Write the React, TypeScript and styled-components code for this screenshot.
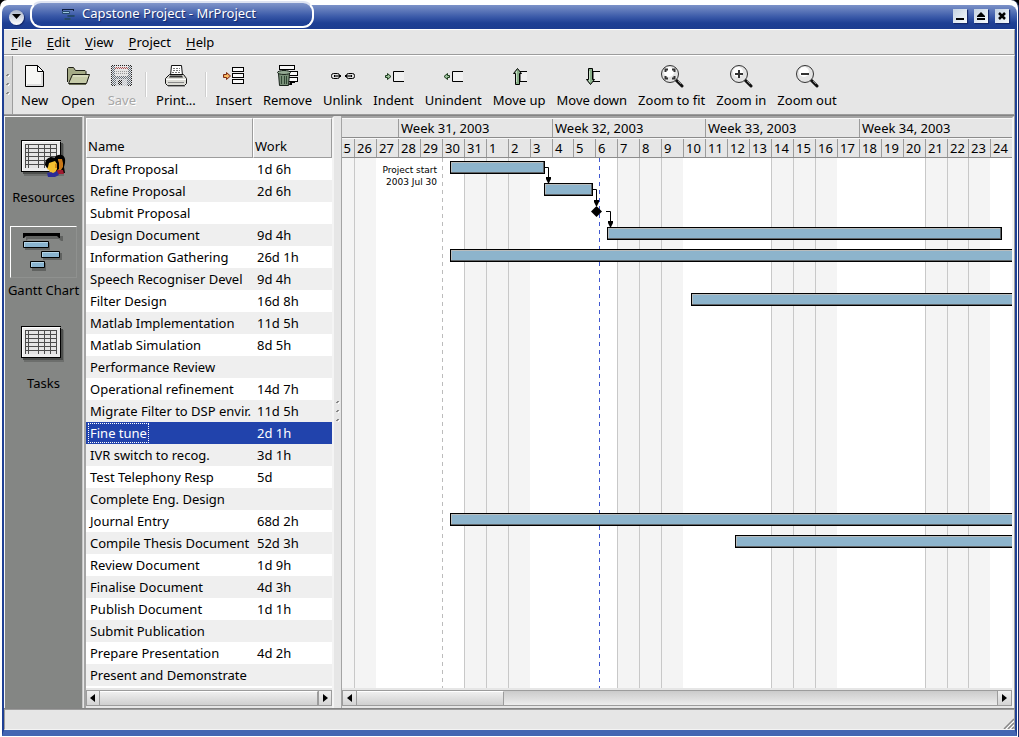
import React from "react";
import styled, { createGlobalStyle, css } from "styled-components";

const FACE = "#e6e6e6";
const DARK = "#9c9c9c";
const FONT = '"Noto Sans", "Open Sans", sans-serif';

const Global = createGlobalStyle`
  * { box-sizing: border-box; }
  body { margin: 0; background: #000; font: 13px/18px ${FONT}; color: #000; }
  button { font: inherit; color: inherit; border: 0; padding: 0; margin: 0; background: none; }
`;

/* ---------- window frame ---------- */

const Frame = styled.div`
  min-height: 100vh;
  display: flex;
  flex-direction: column;
  background: #fff;
  border-right: 1px solid #1b2f6b;
  border-bottom: 1px solid #1b2f6b;
  border-radius: 7px 8px 0 0;
  padding: 5px 1px 1px 2px;
`;

const Body = styled.div`
  flex: 1;
  display: flex;
  flex-direction: column;
  min-width: 0;
  background: ${FACE};
  border-left: 2px solid #1e3f94;
  border-right: 2px solid #1e3f94;
  border-bottom: 6px solid #4466b2;
`;

const TitleBar = styled.header`
  display: flex;
  align-items: center;
  height: 24px;
  padding: 0 8px 0 7px;
  border-radius: 7px 8px 0 0;
  background: linear-gradient(#7c92c8, #3a59a8 50%, #1e3f94 75%, #1c3c90);
`;

const TitleTab = styled.div`
  display: flex;
  align-items: center;
  gap: 7px;
  width: 284px;
  height: 27px;
  margin: -5px auto 0 6px;
  padding: 0 0 0 29px;
  border: 2px solid #fff;
  border-top-color: #dfe4f2;
  border-radius: 11px;
  background: linear-gradient(#8196ca, #3a59a8 55%, #1e3f94 85%);
  color: #fff;
  text-shadow: 1px 1px 1px #14286a;
`;

const Title = styled.h1`
  margin: 0;
  padding-bottom: 3px;
  font: inherit;
`;

const RoundButton = styled.button`
  display: grid;
  place-items: center;
  width: 15px;
  height: 15px;
  border-radius: 50%;
  background: linear-gradient(#a9b4c8, #fff);
  box-shadow: 1px 1px 1px #14286a;
`;

const WindowButtons = styled.div`
  display: flex;
  gap: 7px;
  padding-bottom: 2px;
`;

const WindowButton = styled.button`
  display: grid;
  place-items: center;
  width: 14px;
  height: 14px;
  background: linear-gradient(135deg, #c4d2e2, #f6fafc);
  box-shadow: 1px 1px 1px #14286a;
`;

/* ---------- menu and toolbar ---------- */

const MenuBar = styled.nav`
  display: flex;
  align-items: center;
  height: 26px;
  border-top: 1px solid #fff;
  border-bottom: 1px solid ${DARK};
  border-right: 1px solid ${DARK};
`;

const MenuItem = styled.button`
  padding: 0 8px 0 7px;
  u { text-underline-offset: 2px; }
`;

const ToolBar = styled.div`
  display: flex;
  height: 60px;
  border-top: 1px solid #fff;
  border-bottom: 1px solid ${DARK};
  border-right: 1px solid ${DARK};
`;

const Handle = styled.div`
  display: grid;
  place-items: center;
  width: 9px;
  margin-right: 8px;
  background: #d6d6d6;
  border-right: 1px solid ${DARK};
`;

const ToolGroup = styled.div<{ $gap?: number }>`
  display: flex;
  gap: ${(p) => p.$gap ?? 13}px;
`;

const ToolButton = styled.button`
  display: flex;
  flex-direction: column;
  align-items: center;
  gap: 3px;
  padding-top: 8px;
  white-space: nowrap;
  &:disabled { color: #a6a6a6; text-shadow: 1px 1px 0 #fff; }
  svg { display: block; }
`;

const Divider = styled.div`
  width: 2px;
  height: 25px;
  margin: 16px 9px 0;
  border-left: 1px solid #cfcfcf;
  border-right: 1px solid #fff;
`;

/* ---------- work area ---------- */

const Work = styled.main`
  flex: 1;
  display: flex;
  min-height: 0;
  border-top: 1px solid #848484;
  border-bottom: 1px solid #848484;
  border-right: 1px solid ${DARK};
`;

const Sidebar = styled.nav`
  flex: none;
  width: 79px;
  padding: 16px 0 0;
  display: flex;
  flex-direction: column;
  align-items: center;
  gap: 17px;
  background: #848684;
  border-left: 1px solid #f4f4f4;
  border-right: 1px solid #c6c6c6;
  border-top: 1px solid #f4f4f4;
`;

const View = styled.button`
  display: flex;
  flex-direction: column;
  align-items: center;
  gap: 3px;
  height: 76px;
  white-space: nowrap;
`;

const ViewIcon = styled.span<{ $on?: boolean }>`
  display: grid;
  place-items: center;
  width: 67px;
  height: 52px;
  border: 1px solid transparent;
  ${(p) => p.$on && css`
    border-color: #fff #8f918f #8f918f #fff;
  `}
`;

const Panel = styled.section<{ $grow?: boolean }>`
  display: flex;
  flex-direction: column;
  min-width: 0;
  padding-bottom: 2px;
  border-top: 2px solid #a4a4a4;
  border-left: ${(p) => (p.$grow ? 1 : 2)}px solid #a4a4a4;
  border-right: 2px solid #f4f4f4;
  ${(p) => (p.$grow ? "flex: 1;" : "flex: none; width: 250px; margin-left: 1px;")}
`;

const Pane = styled.div`
  flex: 1;
  min-height: 0;
  overflow: hidden;
  background: #fff;
`;

const Splitter = styled.div`
  flex: none;
  display: grid;
  place-items: center;
  width: 7px;
`;

const TaskTable = styled.table`
  width: 100%;
  table-layout: fixed;
  border-collapse: separate;
  border-spacing: 0;
`;

const HeadCell = styled.th<{ $w?: number }>`
  ${(p) => p.$w && `width: ${p.$w}px;`}
  height: 40px;
  padding: 0 0 2px 1px;
  text-align: left;
  vertical-align: bottom;
  font-weight: 400;
  background: ${FACE};
  border: 1px solid ${DARK};
  border-left-color: #fff;
  border-top-color: #fff;
`;

const TaskRow = styled.tr<{ $on?: boolean }>`
  background: #fff;
  &:nth-child(even) { background: #efefef; }
  ${(p) => p.$on && css`
    && { background: #2143ac; color: #fff; }
  `}
`;

const Cell = styled.td`
  height: 22px;
  padding: 0 0 0 2px;
  white-space: nowrap;
  overflow: hidden;
`;

const CellText = styled.span<{ $focus?: boolean }>`
  display: inline-block;
  padding: 0 1px;
  border: 1px ${(p) => (p.$focus ? "dotted #fff" : "solid transparent")};
`;

/* ---------- scroll bars ---------- */

const Track = styled.div`
  flex: none;
  display: flex;
  height: 16px;
  margin-top: 2px;
  border: 1px solid ${DARK};
  background: linear-gradient(#cbcbcb, #ececec);
`;

const Arrow = styled.button`
  display: grid;
  place-items: center;
  width: 14px;
  background: linear-gradient(#f0f0f0, #d4d4d4);
  &:first-child { border-right: 1px solid ${DARK}; }
  &:last-child { border-left: 1px solid ${DARK}; margin-left: auto; }
`;

const Thumb = styled.div<{ $size: string }>`
  width: ${(p) => p.$size};
  background: linear-gradient(#efefef, #cfcfcf);
  border-right: 1px solid ${DARK};
  border-top: 1px solid #fff;
`;

/* ---------- time scale ---------- */

const Scale = styled.div`
  display: flex;
  height: 20px;
  background: ${FACE};
  border-top: 1px solid #f8f8f8;
  border-bottom: 1px solid #8c8c8c;
`;

const Tick = styled.div<{ $w: number; $end?: boolean }>`
  flex: none;
  display: flex;
  justify-content: ${(p) => (p.$end ? "flex-end" : "flex-start")};
  width: ${(p) => p.$w}px;
  padding: 0 3px 0 2px;
  overflow: hidden;
  white-space: nowrap;
  border-left: 1px solid ${(p) => (p.$end ? "transparent" : DARK)};
`;

const Chart = styled.svg`
  display: block;
  width: 100%;
  height: 530px;
`;

const StatusBar = styled.footer`
  display: flex;
  justify-content: flex-end;
  align-items: flex-end;
  height: 21px;
  border: 1px solid ${DARK};
  border-bottom-color: #f4f4f4;
`;

/* ---------- data ---------- */

const tasks: [string, string][] = [
  ["Draft Proposal", "1d 6h"],
  ["Refine Proposal", "2d 6h"],
  ["Submit Proposal", ""],
  ["Design Document", "9d 4h"],
  ["Information Gathering", "26d 1h"],
  ["Speech Recogniser Devel", "9d 4h"],
  ["Filter Design", "16d 8h"],
  ["Matlab Implementation", "11d 5h"],
  ["Matlab Simulation", "8d 5h"],
  ["Performance Review", ""],
  ["Operational refinement", "14d 7h"],
  ["Migrate Filter to DSP envir.", "11d 5h"],
  ["Fine tune", "2d 1h"],
  ["IVR switch to recog.", "3d 1h"],
  ["Test Telephony Resp", "5d"],
  ["Complete Eng. Design", ""],
  ["Journal Entry", "68d 2h"],
  ["Compile Thesis Document", "52d 3h"],
  ["Review Document", "1d 9h"],
  ["Finalise Document", "4d 3h"],
  ["Publish Document", "1d 1h"],
  ["Submit Publication", ""],
  ["Prepare Presentation", "4d 2h"],
  ["Present and Demonstrate", ""],
];

// July 26 is day 0; the view starts part-way through July 25.
// Eighteen days take 395px; day edges snap to whole pixels.
const dayX = (i: number) => 12 + Math.round((i * 395) / 18);
const days = Array.from({ length: 30 }, (_, i) => i);
const dayNumber = (i: number) => new Date(2003, 6, 26 + i).getDate();
const isOff = (i: number) => i === 0 || (i >= 5 && (i - 5) % 7 < 3);
const weeks = [0, 1, 2, 3];

const bars = [
  { row: 0, x: 108, w: 95 },
  { row: 1, x: 202, w: 49 },
  { row: 3, x: 265, w: 395 },
  { row: 4, x: 108, w: 1500 },
  { row: 6, x: 349, w: 1300 },
  { row: 16, x: 108, w: 1500 },
  { row: 17, x: 393, w: 1200 },
];

/* ---------- drawings ---------- */

const Svg = ({ w = 24, h = 24, children }: { w?: number; h?: number; children: React.ReactNode }) => (
  <svg width={w} height={h} viewBox={`0 0 ${w} ${h}`} aria-hidden="true">{children}</svg>
);

const Grip = () => (
  <Svg w={6} h={24}>
    {[1, 10, 19].map((y) => (
      <g key={y}>
        <path d={`M1 ${y + 1}h1v-1h2v1h-1v1h-2z`} fill="#858585" />
        <path d={`M3 ${y + 2}h1v1h-1z M4 ${y + 1}h1v1h-1z`} fill="#fff" />
      </g>
    ))}
  </Svg>
);

const NewIcon = () => (
  <Svg>
    <path d="M2.500 1.500h12l6 6v15h-18z" fill="#f7f7f5" stroke="#000" />
    <path d="M4 21h15v-12" fill="none" stroke="#ddd" strokeWidth="2" />
    <path d="M14.500 1.500v6h6z" fill="#fff" stroke="#000" strokeLinejoin="round" />
  </Svg>
);

const OpenIcon = () => (
  <Svg>
    <path d="M1.500 18V4.500l1-1h5l2 3h9.500l1 1v4" fill="#a5ab86" stroke="#1c1c14" />
    <path d="M2.500 19.500l4-9h17l-3 9z" fill="#c6cba8" stroke="#1c1c14" strokeLinejoin="round" />
    <path d="M7 12h15" stroke="#e7ead2" />
    <path d="M3 20.500h17" stroke="#6c7158" />
  </Svg>
);

const SaveIcon = () => (
  <Svg>
    <defs>
      <pattern id="stipple" width="2" height="2" patternUnits="userSpaceOnUse">
        <path d="M0 0h1v1h-1z M1 1h1v1h-1z" fill="#e6e6e6" />
      </pattern>
    </defs>
    <g shapeRendering="crispEdges">
      <path d="M1 1h21v21h-20l-1-1z" fill="#222" />
      <path d="M2 2h19v19h-19z" fill="#66707a" />
      <path d="M5 2h13v10h-13z" fill="#e4e4e4" />
      <path d="M5 3h13v2h-13z" fill="#b05050" />
      <path d="M6 7h11v1h-11z M6 9h11v1h-11z" fill="#999" />
      <path d="M6 15h11v7h-11z" fill="#c0c4ca" />
      <path d="M8 16h4v5h-4z" fill="#222" />
      <path d="M1 1h21v21h-21z" fill="url(#stipple)" />
    </g>
  </Svg>
);

const PrintIcon = () => (
  <Svg>
    <path d="M6.500 11.500l1-10h10l1 10z" fill="#fff" stroke="#111" />
    <path d="M9 4.500h7M9 6.500h7M8 8.500h8" stroke="#777" strokeDasharray="2 1" />
    <path d="M1.500 14.500l4-4h14l3 4v5l-2 2h-17l-2-2z" fill="#dcdcd6" stroke="#111" strokeLinejoin="round" />
    <path d="M6 11.500h12l1 2h-14z" fill="#333" />
    <path d="M2 15.500h20" stroke="#fff" />
    <path d="M4 18.500h16" stroke="#888" />
    <path d="M4 22h17" stroke="#555" />
  </Svg>
);

const Slots = ({ x, ys, w = 11 }: { x: number; ys: number[]; w?: number }) => (
  <>
    {ys.map((y) => (
      <rect key={y} x={x + 0.5} y={y + 0.5} width={w} height={4} fill="#f8f8f8" stroke="#000" />
    ))}
  </>
);

const InsertIcon = () => (
  <Svg>
    <Slots x={10} ys={[3, 9, 15]} />
    <path d="M1.500 10.500h3v-2l4 3.500-4 3.500v-2h-3z" fill="#f0a060" stroke="#7c2d10" />
    <path d="M3 12h3" stroke="#ffe060" />
  </Svg>
);

const RemoveIcon = () => (
  <Svg>
    <Slots x={4} ys={[1]} w={15} />
    <Slots x={10} ys={[7, 13]} w={12} />
    <path d="M15 17h5v2h-3v2h-3z" />
    <path d="M3.500 9.500h11l-1 12h-9z" fill="#789078" stroke="#18221a" />
    <ellipse cx="9" cy="8.500" rx="6.500" ry="2" fill="#93aa93" stroke="#18221a" />
    <path d="M6.500 12v8M9.500 12v8M11.500 12v8" stroke="#304634" />
    <path d="M7 6.500h4" stroke="#18221a" />
  </Svg>
);

const UnlinkIcon = () => (
  <Svg w={26}>
    <rect x="1.500" y="9.500" width="8" height="5" rx="2" fill="#ddd" stroke="#000" />
    <path d="M4 11.500h7M4 12.500h7" stroke="#000" />
    <path d="M5 12h4" stroke="#bbb" />
    <rect x="16.500" y="9.500" width="8" height="5" rx="2" fill="#ddd" stroke="#000" />
    <path d="M15 11.500h7M15 12.500h7" stroke="#000" />
    <path d="M17 12h4" stroke="#bbb" />
  </Svg>
);

const IndentIcon = ({ out }: { out?: boolean }) => (
  <Svg>
    <rect x="12" y="8" width="10" height="9" fill="#f0f0f0" />
    <path d="M22 7.500h-10.500v10h10.500" fill="none" stroke="#000" />
    <path
      d={out ? "M8.500 11.500h-2v-2l-3.500 3 3.500 3v-2h2z" : "M3.500 11.500h2v-2l3.500 3-3.500 3v-2h-2z"}
      fill="#9cc29c"
      stroke="#1c3a1c"
    />
  </Svg>
);

const MoveIcon = ({ down }: { down?: boolean }) => (
  <Svg>
    <rect x="11" y="8" width="9" height="9" fill="#f0f0f0" />
    <path d="M20 7.500h-7v10h7" fill="none" stroke="#000" />
    <path
      d={down ? "M8.500 4.500h4v11h2l-4 5-4-5h2z" : "M8.500 20.500h4v-11h2l-4-5-4 5h2z"}
      fill="#88ae88"
      stroke="#000"
    />
    <path d="M9.500 7v11" stroke="#c4dcc4" />
  </Svg>
);

const ZoomIcon = ({ kind }: { kind: "fit" | "in" | "out" }) => (
  <Svg>
    <path d="M16 16l6 6" stroke="#111" strokeWidth="3" strokeLinecap="round" />
    <path d="M18 17l3 3" stroke="#888" />
    <circle cx="10" cy="10" r="8.500" fill="#e4e4e4" stroke="#333" />
    <circle cx="9" cy="8" r="5" fill="#fff" />
    {kind === "fit" ? (
      <path d="M8 5.500h-2.500v2.500M12 5.500h2.500v2.500M8 14.500h-2.500v-2.500M12 14.500h2.500v-2.500" fill="none" stroke="#333" strokeWidth="2" />
    ) : (
      <path d={kind === "in" ? "M6 10h8M10 6v8" : "M6 10h8"} stroke="#333" strokeWidth="2" />
    )}
  </Svg>
);

const Sheet = () => (
  <>
    <rect x="4" y="5" width="40" height="32" fill="#6c6e6c" />
    <rect x="3" y="4" width="40" height="31" fill="#4c4e4c" />
    <rect x="1.500" y="1.500" width="39" height="31" fill="#ececec" stroke="#000" />
    <path d="M2.500 32V2.500h38" fill="none" stroke="#fff" />
    <rect x="5" y="5" width="32" height="24" fill="#4c4c4c" />
    {[6, 10, 14, 18, 22, 26].map((y) => (
      <path key={y} d={`M6 ${y}h2v3h-2z M9 ${y}h9v3h-9z M19 ${y}h5v3h-5z M25 ${y}h5v3h-5z M31 ${y}h5v3h-5z`} fill="#e4e4e4" />
    ))}
  </>
);

const ResourcesIcon = () => (
  <Svg w={48} h={40}>
    <Sheet />
    <path d="M34 20q2-5 8-4 4 2 3 8l-1 4 1 6h-9z" fill="#000" />
    <path d="M38 20h4l1 4v4l-2 3h-4z" fill="#c87818" />
    <path d="M37 31h6l1 4h-8z" fill="#a01c30" />
    <path d="M25 26q0-7 6-8 7 0 8 6v6l-3 2-9-3z" fill="#000" />
    <path d="M29 24l6-2 2 3v5l-2 4h-5l-1-3-2-1 1-2z" fill="#f4c030" />
    <path d="M35 25h2v4h-2z" fill="#d08818" />
    <path d="M27 34l4-1 2 1 4-2 2 4-4 2h-7z" fill="#2c2c98" />
  </Svg>
);

const TasksIcon = () => <Svg w={48} h={40}><Sheet /></Svg>;

const GanttIcon = () => (
  <Svg w={48} h={40}>
    <path d="M7 4h37v5h-2l-2-2H9l-2 2zM6 11h25v7H6zM24 21h19v7H24zM13 31h14v8H13z" fill="#606260" />
    <path d="M4 1h37v5h-1l-2-2H7l-2 2H4z" fill="#000" />
    <path d="M4.500 9.500h25v6h-25zM22.500 19.500h18v6h-18zM11.500 29.500h14v6h-14z" fill="#8ab4cf" stroke="#000" />
    <path d="M5.500 15V10.500H29M23.500 25v-4.500H40M12.500 35v-4.500H25" fill="none" stroke="#b4d4e6" />
  </Svg>
);

const TitleIcon = () => (
  <Svg w={14} h={14}>
    <path d="M1 1h12v2h-1v-1h-10v1h-1z" fill="#0c1c3c" />
    <path d="M1.500 3.500h7v2h-7zM6.500 7.500h7v1h-7zM3.500 10.500h6v1h-6z" fill="#9cc8dc" stroke="#24486c" />
  </Svg>
);

const Triangle = ({ left }: { left?: boolean }) => (
  <Svg w={5} h={8}><path d={left ? "M5 0v8L0 4z" : "M0 0v8l5-4z"} /></Svg>
);

const ResizeGrip = () => (
  <Svg w={11} h={11}>
    <path d="M1 11L11 1M5 11l6-6M9 11l2-2" stroke="#888" strokeWidth="1.500" />
    <path d="M3 11l8-8M7 11l4-4" stroke="#fff" />
  </Svg>
);

const Bar = ({ row, x, w }: { row: number; x: number; w: number }) => {
  const y = 3 + row * 22;
  return (
    <g shapeRendering="crispEdges">
      <rect x={x} y={y} width={w} height={13} fill="#000" />
      <rect x={x + 1} y={y + 1} width={w - 2} height={11} fill="#5f6467" />
      <rect x={x + 1} y={y + 1} width={w - 3} height={10} fill="#b9bcbc" />
      <rect x={x + 2} y={y + 2} width={w - 4} height={9} fill="#8db4cc" />
    </g>
  );
};

const Link = ({ x, y, dx, bottom }: { x: number; y: number; dx: number; bottom: number }) => (
  <g>
    <path d={`M${x} ${y + 0.5}h${dx + 0.5}V${bottom}`} fill="none" stroke="#000" />
    <path d={`M${x + dx - 2} ${bottom - 6}h5v2l-2 4h-1l-2-4z`} />
  </g>
);

const GanttChart = () => (
  <Chart role="img" aria-label="Gantt chart">
    <g shapeRendering="crispEdges">
      <rect x="0" y="0" width="12" height="100%" fill="#f4f4f4" />
      {days.filter(isOff).map((i) => (
        <React.Fragment key={i}>
          <rect x={dayX(i)} y="0" width={dayX(i + 1) - dayX(i)} height="100%" fill="#f4f4f4" />
          <rect x={dayX(i)} y="0" width="1" height="100%" fill="#c8c8c8" />
        </React.Fragment>
      ))}
      <line x1="100.500" x2="100.500" y1="0" y2="100%" stroke="#bcbcbc" strokeDasharray="4 4" />
      <line x1="257.500" x2="257.500" y1="0" y2="100%" stroke="#4058d0" strokeDasharray="4 4" />
    </g>
    <g fontFamily='"DejaVu Sans", sans-serif' fontSize="9" textAnchor="end">
      <text x="95" y="15">Project start</text>
      <text x="95" y="27">2003 Jul 30</text>
    </g>
    {bars.map((b) => <Bar key={b.row} {...b} />)}
    <Link x={203} y={9} dx={3} bottom={25} />
    <Link x={251} y={31} dx={3} bottom={48} />
    <Link x={264} y={53} dx={4} bottom={69} />
    <path d="M254.500 48l5.500 5.500-5.500 5.500-5.500-5.500z" />
  </Chart>
);

const Menu = ({ label }: { label: string }) => (
  <MenuItem><u>{label[0]}</u>{label.slice(1)}</MenuItem>
);

const Tool = ({ icon, label, disabled }: { icon: React.ReactNode; label: string; disabled?: boolean }) => (
  <ToolButton disabled={disabled}>{icon}{label}</ToolButton>
);

const ScrollBar = ({ size }: { size: string }) => (
  <Track>
    <Arrow aria-label="Scroll left"><Triangle left /></Arrow>
    <Thumb $size={size} />
    <Arrow aria-label="Scroll right"><Triangle /></Arrow>
  </Track>
);

export default function App() {
  return (
    <>
      <Global />
      <Frame>
        <TitleBar>
          <RoundButton aria-label="Window menu">
            <Svg w={9} h={6}><path d="M0 0h9L4.500 5z" /></Svg>
          </RoundButton>
          <TitleTab>
            <TitleIcon />
            <Title>Capstone Project - MrProject</Title>
          </TitleTab>
          <WindowButtons>
            <WindowButton aria-label="Minimize">
              <Svg w={10} h={10}><path d="M1 7h8v2h-8z" /></Svg>
            </WindowButton>
            <WindowButton aria-label="Maximize">
              <Svg w={10} h={10}><path d="M5 1l4 4v1h-8v-1zM1 7h8v2h-8z" /></Svg>
            </WindowButton>
            <WindowButton aria-label="Close">
              <Svg w={10} h={10}><path d="M2 2l6 6M8 2l-6 6" stroke="#000" strokeWidth="2.500" /></Svg>
            </WindowButton>
          </WindowButtons>
        </TitleBar>
        <Body>
          <MenuBar>
            {["File", "Edit", "View", "Project", "Help"].map((m) => <Menu key={m} label={m} />)}
          </MenuBar>
          <ToolBar>
            <Handle><Grip /></Handle>
            <ToolGroup>
              <Tool icon={<NewIcon />} label="New" />
              <Tool icon={<OpenIcon />} label="Open" />
              <Tool icon={<SaveIcon />} label="Save" disabled />
            </ToolGroup>
            <Divider />
            <Tool icon={<PrintIcon />} label="Print..." />
            <Divider />
            <ToolGroup $gap={11}>
              <Tool icon={<InsertIcon />} label="Insert" />
              <Tool icon={<RemoveIcon />} label="Remove" />
              <Tool icon={<UnlinkIcon />} label="Unlink" />
              <Tool icon={<IndentIcon />} label="Indent" />
              <Tool icon={<IndentIcon out />} label="Unindent" />
              <Tool icon={<MoveIcon />} label="Move up" />
              <Tool icon={<MoveIcon down />} label="Move down" />
              <Tool icon={<ZoomIcon kind="fit" />} label="Zoom to fit" />
              <Tool icon={<ZoomIcon kind="in" />} label="Zoom in" />
              <Tool icon={<ZoomIcon kind="out" />} label="Zoom out" />
            </ToolGroup>
          </ToolBar>
          <Work>
            <Sidebar>
              <View><ViewIcon><ResourcesIcon /></ViewIcon>Resources</View>
              <View><ViewIcon $on><GanttIcon /></ViewIcon>Gantt Chart</View>
              <View><ViewIcon><TasksIcon /></ViewIcon>Tasks</View>
            </Sidebar>
            <Panel>
              <Pane>
                <TaskTable>
                  <thead>
                    <tr>
                      <HeadCell>Name</HeadCell>
                      <HeadCell $w={79}>Work</HeadCell>
                    </tr>
                  </thead>
                  <tbody>
                    {tasks.map(([name, work]) => {
                      const on = name === "Fine tune";
                      return (
                        <TaskRow key={name} $on={on}>
                          <Cell><CellText $focus={on}>{name}</CellText></Cell>
                          <Cell><CellText>{work}</CellText></Cell>
                        </TaskRow>
                      );
                    })}
                  </tbody>
                </TaskTable>
              </Pane>
              <ScrollBar size="100%" />
            </Panel>
            <Splitter><Grip /></Splitter>
            <Panel $grow>
              <Pane>
                <Scale>
                  <Tick $w={dayX(2)} $end />
                  {weeks.map((i) => (
                    <Tick key={i} $w={dayX(i * 7 + 9) - dayX(i * 7 + 2)}>Week {31 + i}, 2003</Tick>
                  ))}
                </Scale>
                <Scale>
                  <Tick $w={12} $end>25</Tick>
                  {days.map((i) => (
                    <Tick key={i} $w={dayX(i + 1) - dayX(i)}>{dayNumber(i)}</Tick>
                  ))}
                </Scale>
                <GanttChart />
              </Pane>
              <ScrollBar size="22%" />
            </Panel>
          </Work>
          <StatusBar><ResizeGrip /></StatusBar>
        </Body>
      </Frame>
    </>
  );
}
